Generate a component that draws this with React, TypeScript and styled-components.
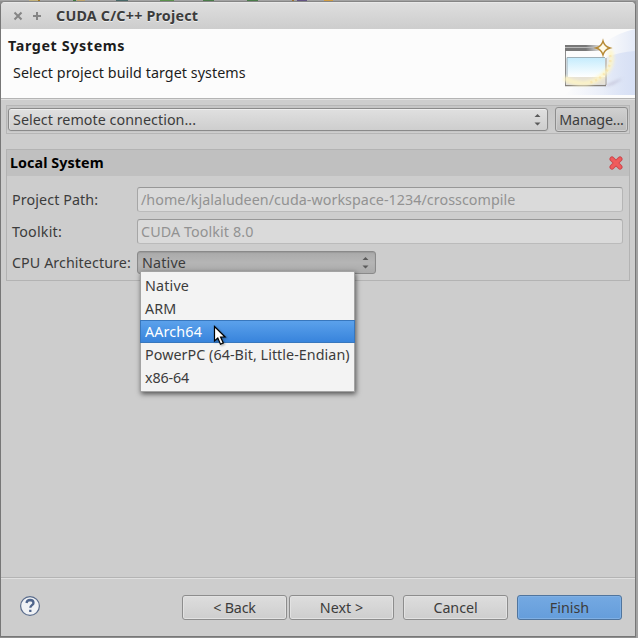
import React from "react";
import styled, { createGlobalStyle, css } from "styled-components";

const Global = createGlobalStyle`
  * { box-sizing: border-box; }
  body { margin: 0; background: #999; overflow: hidden; }
`;

const Desktop = styled.div`
  width: 638px;
  height: 638px;
  display: flex;
  flex-direction: column;
  background: linear-gradient(90deg, #8f8f8f 0 636px, #a2a2a2 636px);
  font: 14.3px/20px "Noto Sans", "Open Sans", sans-serif;
  color: #3c3c3c;
`;

const Backdrop = styled.svg`
  display: block;
  flex: none;
`;

const Window = styled.main`
  width: 636px;
  height: 636px;
  display: flex;
  flex-direction: column;
  background: #cdcdcd;
  border: 1px solid #777;
  border-top-color: #858585;
  border-radius: 5px 5px 0 0;
  overflow: hidden;
`;

const Text = styled.span<{ $track?: number; $bold?: boolean }>`
  white-space: pre;
  letter-spacing: ${(p) => p.$track ?? 0.04}px;
  font-weight: ${(p) => (p.$bold ? 700 : 400)};
`;

const TitleBar = styled.header`
  flex: none;
  height: 27px;
  display: flex;
  align-items: center;
  padding-left: 12px;
  gap: 9px;
  background: linear-gradient(#dedede, #cdcdcd);
  border-top: 1px solid #e8e8e8;
`;

const TitleText = styled(Text)`
  margin-left: 5px;
  text-shadow: 0 1px #eee;
`;

const Banner = styled.section`
  flex: none;
  height: 69px;
  display: flex;
  justify-content: space-between;
  background: #fcfcfc;
`;

const BannerText = styled.div`
  display: flex;
  flex-direction: column;
  align-items: flex-start;
  padding: 7px 0 0 7px;
  gap: 7px;
  color: #1d1d1d;
`;

const Indent = styled.div`
  display: flex;
  padding-left: 5px;
`;

const Rule = styled.div`
  flex: none;
  height: 2px;
  background: #e0e0e0;
  border-top: 1px solid #b4b4b4;
`;

const Body = styled.div`
  flex: 1;
  padding: 5px 5px 0;
`;

const ConnectionBar = styled.div`
  width: 624px;
  height: 29px;
  display: flex;
  align-items: center;
  justify-content: space-between;
  padding: 0 1px;
  border: 1px solid #b6b6b6;
  background: linear-gradient(#c6c6c6, #cecece);
`;

const control = css`
  display: flex;
  align-items: center;
  border: 1px solid #8a8a8a;
  border-radius: 3px;
`;

const Combo = styled.div<{ $width: number; $pressed?: boolean }>`
  ${control}
  width: ${(p) => p.$width}px;
  height: 23px;
  justify-content: space-between;
  padding: 0 6px 0 4px;
  background: ${(p) => (p.$pressed ? "linear-gradient(#aaa, #b5b5b5 50%, #ababab)" : "linear-gradient(#e0e0e0, #cecece)")};
  box-shadow: ${(p) => (p.$pressed ? "inset 0 1px 1px #9b9b9b" : "inset 0 1px #eee, inset 1px 0 #ddd, 0 0 0 1px #c6c6c6")};
`;

const Button = styled.button<{ $width: number; $primary?: boolean; $flat?: boolean }>`
  ${control}
  width: ${(p) => p.$width}px;
  height: 25px;
  padding: 0;
  justify-content: center;
  font: inherit;
  color: #3c3c3c;
  background: ${(p) =>
    p.$primary ? "linear-gradient(#74a9e2, #659ddb)" : p.$flat ? "linear-gradient(#d1d1d1, #bababa)" : "linear-gradient(#dddddd, #cecece)"};
  border-color: ${(p) => (p.$primary ? "#50759e" : "#8d8d8d")};
  box-shadow: inset 0 0 0 1px ${(p) => (p.$primary ? "#80b0e4" : p.$flat ? "#cfcfcf" : "#e2e2e2")};
`;

const Panel = styled.section`
  width: 624px;
  height: 132px;
  margin-top: 15px;
  border: 1px solid #b3b3b3;
`;

const PanelHead = styled.div`
  height: 26px;
  display: flex;
  align-items: center;
  justify-content: space-between;
  padding: 0 6px 0 3px;
  background: #c0c0c0;
  color: #000;
`;

const Form = styled.div`
  display: grid;
  grid-template-columns: 125px 486px;
  grid-template-rows: 25px 25px 23px;
  row-gap: 7px;
  padding: 11px 0 0 5px;
  align-items: center;
`;

const Field = styled.div`
  ${control}
  height: 25px;
  padding-left: 3px;
  background: #dadada;
  border-color: #979797 #b5b5b5 #bbb #a6a6a6;
  color: #929292;
`;

const Anchor = styled.div`
  position: relative;
`;

const Menu = styled.ul`
  position: absolute;
  z-index: 2;
  left: 3px;
  top: 20px;
  width: 215px;
  height: 121px;
  margin: 0;
  padding: 2px 0;
  list-style: none;
  background: #f3f3f3;
  border: 1px solid #a3a3a3;
  box-shadow: 1px 2px 5px rgba(0, 0, 0, 0.6);
`;

const MenuItem = styled.li<{ $active?: boolean }>`
  height: 23px;
  display: flex;
  align-items: center;
  margin: 0 -1px;
  padding-left: 4px;
  border: 1px solid transparent;
  ${(p) =>
    p.$active &&
    css`
      color: #fff;
      border-color: #3877bd;
      background: linear-gradient(#5ba1eb, #3884dc);
    `}
`;

const Pointer = styled.svg`
  position: absolute;
  z-index: 3;
  left: 76px;
  top: 74px;
  filter: drop-shadow(1px 1px 1px rgba(0, 0, 0, 0.35));
`;

const Footer = styled.footer`
  flex: none;
  height: 57px;
  display: flex;
  align-items: center;
  padding: 0 13px 0 18px;
`;

const HelpIcon = styled.svg`
  margin-bottom: 3px;
`;

const Actions = styled.div`
  display: flex;
  margin-left: auto;
  gap: 9px;
`;

const Pair = styled.div`
  display: flex;
  gap: 2px;
`;

const Arrows = () => (
  <svg width="7" height="13" viewBox="0 0 7 13">
    <path d="M.5 4 3.5.9 6.5 4ZM.5 9.500 3.500 12.600 6.500 9.500Z" fill="#5a5a5a" />
  </svg>
);

const WizardArt = () => (
  <svg width="80" height="66" viewBox="0 0 80 66">
    <defs>
      <linearGradient id="sweep" x1="0" x2="1">
        <stop offset="0" stopColor="#dce4f6" stopOpacity="0" />
        <stop offset="1" stopColor="#d7e0f5" />
      </linearGradient>
      <linearGradient id="pane" x1="0" x2="0" y1="0" y2="1">
        <stop offset="0" stopColor="#c3ebfd" />
        <stop offset="1" stopColor="#fff" />
      </linearGradient>
      <linearGradient id="bar" x1="0" x2="1">
        <stop offset=".6" stopColor="#777" />
        <stop offset="1" stopColor="#e4e4e4" />
      </linearGradient>
      <filter id="soft" x="-30%" y="-30%" width="160%" height="160%">
        <feGaussianBlur stdDeviation="1.4" />
      </filter>
    </defs>
    <path d="M80 0Q62 4 51 13L48 66H80Z" fill="url(#sweep)" opacity=".65" />
    <path d="M80 22Q65 23 52 28L10 66H80Z" fill="url(#sweep)" />
    <g transform="translate(1 0)">
      <path d="M48 57 67 49Q58 56 50 57Z" fill="#aaa5c0" opacity=".7" filter="url(#soft)" />
      <path d="M10 17H49V56H10Z" fill="#fcfcfc" />
      <path d="M9.500 17V56" stroke="#8c8c8c" />
      <path d="M50 29V56" stroke="#b7b3ae" strokeWidth="1.5" />
      <path d="M9 16H44V22H9Z" fill="url(#bar)" />
      <path d="M9 18.500H40" stroke="#b8b8b8" />
      <path d="M11 28H49V48H11Z" fill="url(#pane)" />
      <path d="M11 48V28.500H49" fill="none" stroke="#9fb0b8" strokeWidth="1" />
      <path d="M10 48H49V55H10Z" fill="#e7e2d6" />
      <path d="M9 56.500H50" stroke="#858079" strokeWidth="1.3" />
      <path d="M54 21Q60 38 43 49Q28 60 8 49" fill="none" stroke="#fff6c4" strokeWidth="5" opacity=".8" filter="url(#soft)" />
      <path d="M54 26Q56 39 45 48Q40 52 33 54" fill="none" stroke="#f9dc94" strokeWidth="2.500" strokeDasharray="2 3" opacity=".5" />
      <path d="M47 12Q48.500 17.500 54 19Q48.500 20.500 47 26Q45.500 20.500 40 19Q45.500 17.500 47 12Z" fill="#fffbe9" stroke="#b78b38" strokeWidth="1.4" />
    </g>
  </svg>
);

const menuItems: { label: string; track: number }[] = [
  { label: "Native", track: 0.16 },
  { label: "ARM", track: 0.15 },
  { label: "AArch64", track: 0.15 },
  { label: "PowerPC (64-Bit, Little-Endian)", track: 0.06 },
  { label: "x86-64", track: -0.12 },
];

const backdropIcons: [number, number, string][] = [
  [29, 9, "#c3b37d"],
  [38, 2, "#a6761b"],
  [73, 3, "#3d7a3d"],
  [77, 8, "#c0a56b"],
  [116, 12, "#486868"],
  [160, 14, "#5b914c"],
  [203, 11, "#4a7b49"],
  [247, 11, "#4a7b49"],
  [292, 2, "#9d702c"],
  [297, 10, "#645483"],
  [324, 9, "#d29d43"],
];

export default function App() {
  return (
    <Desktop>
      <Global />
      <Backdrop width="638" height="1">
        <rect width="638" height="1" fill="#a3a3a3" />
        {backdropIcons.map(([x, w, fill]) => (
          <rect key={x} x={x} width={w} height="1" fill={fill} />
        ))}
      </Backdrop>
      <Window>
        <TitleBar>
          <svg width="10" height="10" viewBox="0 0 10 10">
            <path d="m1.500 1.500 7 7m0-7-7 7" stroke="#858585" strokeWidth="2" />
          </svg>
          <svg width="10" height="10" viewBox="0 0 10 10">
            <path d="M5 1v8M1 5h8" stroke="#858585" strokeWidth="2" />
          </svg>
          <TitleText $bold $track={0.21}>CUDA C/C++ Project</TitleText>
        </TitleBar>
        <Banner>
          <BannerText>
            <Text $bold $track={0.62}>Target Systems</Text>
            <Indent>
              <Text $track={0.06}>Select project build target systems</Text>
            </Indent>
          </BannerText>
          <WizardArt />
        </Banner>
        <Rule />
        <Body>
          <ConnectionBar>
            <Combo $width={540}>
              <Text>Select remote connection...</Text>
              <Arrows />
            </Combo>
            <Button $width={73} $flat>
              <Text $track={-0.2}>Manage...</Text>
            </Button>
          </ConnectionBar>
          <Panel>
            <PanelHead>
              <Text $bold $track={0.08}>Local System</Text>
              <svg width="14" height="14" viewBox="0 0 14 14">
                <path d="m3 3 8 8m0-8-8 8" stroke="#cb444a" strokeWidth="5" strokeLinecap="round" />
                <path d="m3 3 8 8m0-8-8 8" stroke="#f05c5c" strokeWidth="3.200" strokeLinecap="round" />
              </svg>
            </PanelHead>
            <Form>
              <Text $track={0.1}>Project Path:</Text>
              <Field>
                <Text $track={0.05}>/home/kjalaludeen/cuda-workspace-1234/crosscompile</Text>
              </Field>
              <Text $track={0.22}>Toolkit:</Text>
              <Field>
                <Text $track={0.1}>CUDA Toolkit 8.0</Text>
              </Field>
              <Text $track={0.07}>CPU Architecture:</Text>
              <Anchor>
                <Combo $width={239} $pressed>
                  <Text $track={0.16}>Native</Text>
                  <Arrows />
                </Combo>
                <Menu>
                  {menuItems.map(({ label, track }) => (
                    <MenuItem key={label} $active={label === "AArch64"}>
                      <Text $track={track}>{label}</Text>
                    </MenuItem>
                  ))}
                </Menu>
                <Pointer width="16" height="22" viewBox="0 0 16 22">
                  <path d="M1.500 1.500V16l3.300-3 2.700 6.200 2.800-1.300-2.700-5.900h4.500Z" fill="#fff" stroke="#000" strokeWidth="1.200" />
                </Pointer>
              </Anchor>
            </Form>
          </Panel>
        </Body>
        <Rule />
        <Footer>
          <HelpIcon width="22" height="22" viewBox="0 0 22 22">
            <circle cx="11" cy="11" r="9.400" fill="#f0f2f5" stroke="#5a6c8c" strokeWidth="1.200" />
            <path d="M7.500 8q.4-3 3.700-3 3.300.1 3.300 2.900c0 2.300-3.200 2.300-3.200 4.900M11.300 14.800v2.200" fill="none" stroke="#4f658c" strokeWidth="2.300" />
          </HelpIcon>
          <Actions>
            <Pair>
              <Button $width={105}><Text $track={-0.2}>{"< Back"}</Text></Button>
              <Button $width={105}><Text $track={0}>{"Next >"}</Text></Button>
            </Pair>
            <Button $width={105}><Text $track={-0.05}>Cancel</Text></Button>
            <Button $width={105} $primary><Text $track={0}>Finish</Text></Button>
          </Actions>
        </Footer>
      </Window>
    </Desktop>
  );
}
